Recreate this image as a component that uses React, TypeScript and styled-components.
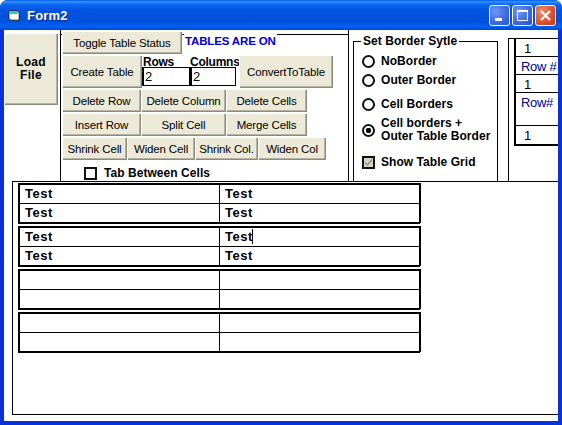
import React from "react";
import styled, { createGlobalStyle } from "styled-components";

const Global = createGlobalStyle`
  html, body { margin: 0; padding: 0; background: #fff; }
  * { box-sizing: border-box; }
  body { font-family: "Liberation Sans", Arial, sans-serif; color: #000; }
`;

const Win = styled.div`
  width: 562px; height: 425px; display: flex; flex-direction: column; overflow: hidden;
  background: #0831d9; border-radius: 8px 8px 0 0;
`;
const TitleBar = styled.div`
  height: 30px; flex: none; display: flex; align-items: center; padding: 0 6px 0 7px;
  background: linear-gradient(180deg, #0058ee 0%, #3593ff 6%, #0a6af0 14%, #0053e1 35%, #0050dc 70%, #0161f2 88%, #0048d0 100%);
`;
const TitleIcon = styled.svg`width: 15px; height: 15px; flex: none; margin-right: 5px;`;
const TitleText = styled.div`
  flex: 1; color: #fff; font-size: 13px; font-weight: 700; letter-spacing: .2px; text-shadow: 1px 1px 1px #0a2a90;
`;
const CapBtn = styled.div<{ $close?: boolean }>`
  width: 21px; height: 21px; margin-left: 2px; border: 1px solid #fff; border-radius: 3px; display: flex;
  align-items: center; justify-content: center;
  background: ${(p) => p.$close
    ? "radial-gradient(circle at 30% 30%, #e9906f, #d8502d 60%, #c23a1a)"
    : "radial-gradient(circle at 30% 30%, #6f97f2, #3a68e0 60%, #2a4fcf)"};
`;
const Client = styled.div`
  flex: 1; min-height: 0; margin: 0 4px 4px 4px; background: #fff; display: flex; flex-direction: column;
`;
const Top = styled.div`height: 151px; flex: none; display: flex; align-items: flex-start;`;

const Btn = styled.button<{ $w: number; $h?: number; $ml?: number }>`
  width: ${(p) => p.$w}px; height: ${(p) => p.$h ?? 23}px; flex: none; padding: 0; margin: 0 0 0 ${(p) => p.$ml ?? 0}px;
  font: 11.5px "Liberation Sans", Arial, sans-serif; letter-spacing: -.15px; color: #000; background: #ece9d8;
  border: 0; border-radius: 0;
  box-shadow: inset 1px 1px 0 #fff, inset -1px -1px 0 #8c8a7c, inset -2px -2px 0 #b5b2a4;
`;
const LoadCol = styled.div`width: 56px; flex: none; padding-top: 3px;`;
const LoadBtn = styled(Btn)`
  font-weight: 700; font-size: 12px; line-height: 13px; letter-spacing: .3px;
`;
const ControlsFrame = styled.div`
  width: 289px; height: 151px; flex: none; border-left: 1px solid #000; border-right: 1px solid #000;
  padding-left: 1px; display: flex; flex-direction: column; position: relative;
`;
const TopLine = styled.div`
  position: absolute; left: 0; right: 0; top: 4px; height: 1px; background: #000;
`;
const Row = styled.div<{ $mt?: number }>`
  display: flex; position: relative; margin-top: ${(p) => p.$mt ?? 0}px;
`;
const Status = styled.div`
  margin-left: 2px; padding: 0 1px; height: 20px; background: #fff; color: #0000d0;
  font-size: 11.5px; font-weight: 700; line-height: 21px; letter-spacing: -.15px; white-space: nowrap;
`;
const Field = styled.div<{ $w: number }>`
  width: ${(p) => p.$w}px; flex: none; display: flex; flex-direction: column;
`;
const FieldLabel = styled.div<{ $pl: number }>`
  height: 12px; font-size: 12px; font-weight: 700; line-height: 14px; padding-left: ${(p) => p.$pl}px; white-space: nowrap;
  letter-spacing: -.25px;
`;
const Input = styled.div<{ $w: number }>`
  width: ${(p) => p.$w}px; height: 19px; border: 1px solid #000; border-left-width: 2px;
  font-size: 13px; line-height: 17px; padding-left: 1px; background: #fff;
`;
const TabRow = styled.div`
  display: flex; align-items: center; margin: 6px 0 0 22px; font-size: 12px; font-weight: 700; letter-spacing: .05px;
`;
const CheckBox = styled.span<{ $disabled?: boolean }>`
  width: 13px; height: 13px; flex: none; border: 2px solid #111; background: ${(p) => (p.$disabled ? "#d8d5c8" : "#fff")};
  margin: 0 ${(p) => (p.$disabled ? 6 : 7)}px 0 0; display: flex; align-items: center; justify-content: center;
`;

const BorderFrame = styled.div`
  width: 145px; height: 140px; flex: none; margin: 11px 0 0 4px; border: 1px solid #000; border-bottom: 0;
  position: relative; padding: 12px 0 0 8px; display: flex; flex-direction: column;
`;
const Legend = styled.div`
  position: absolute; top: -7px; left: 7px; background: #fff; padding: 0 2px; font-size: 12px; font-weight: 700;
  line-height: 13px; letter-spacing: .05px; white-space: nowrap;
`;
const Radio = styled.div<{ $h: number; $mt?: number }>`
  display: flex; align-items: center; height: ${(p) => p.$h}px; margin-top: ${(p) => p.$mt ?? 0}px;
  font-size: 12px; font-weight: 700; line-height: 13px; letter-spacing: .05px; white-space: nowrap;
`;
const Dot = styled.span<{ $on?: boolean }>`
  width: 13px; height: 13px; flex: none; border: 2px solid #111; border-radius: 50%; margin-right: 6px;
  background: ${(p) => (p.$on ? "radial-gradient(circle, #000 0 2.5px, #fff 3px)" : "#fff")};
`;
const RowsFrame = styled.div`
  width: 50px; height: 143px; flex: none; margin: 8px 0 0 10px; border-left: 1px solid #000; border-top: 1px solid #000;
  padding-left: 5px; overflow: hidden;
`;
const MiniTable = styled.div`
  width: 60px; border: 2px solid #000; border-top: 0; border-right: 0; display: flex; flex-direction: column;
`;
const MiniRow = styled.div<{ $h: number; $blue?: boolean; $last?: boolean }>`
  height: ${(p) => p.$h}px; padding: 2px 0 0 ${(p) => (p.$blue ? 5 : 8)}px; font-size: 13px; line-height: 15px;
  letter-spacing: ${(p) => (p.$blue ? "-.3px" : 0)};
  color: ${(p) => (p.$blue ? "#000080" : "#000")};
  border-bottom: ${(p) => (p.$last ? 0 : "1px solid #000")}; white-space: nowrap;
`;

const Canvas = styled.div`
  height: 234px; flex: none; margin-left: 8px; border: 1px solid #000; border-right: 0;
  padding: 1px 0 0 5px; display: flex; flex-direction: column; gap: 2px;
`;
const DocTable = styled.div`
  width: 403px; height: 41px; flex: none; border: 2px solid #000; display: grid;
  grid-template-columns: 200px 1fr; grid-template-rows: 19px 1fr; position: relative;
  &::after { content: ""; position: absolute; right: -2px; bottom: -2px; width: 1px; height: 1px; background: #fff; }
`;
const Cell = styled.div<{ $right?: boolean; $bottom?: boolean }>`
  padding-left: 5px; font-size: 13px; font-weight: 700; letter-spacing: .55px; line-height: 18px;
  border-right: ${(p) => (p.$right ? 0 : "1px solid #000")};
  border-bottom: ${(p) => (p.$bottom ? 0 : "1px solid #000")};
`;
const Caret = styled.span`
  display: inline-block; width: 1px; height: 15px; background: #000; vertical-align: -3px; margin-left: -1px;
`;

const tables = [
  [["Test", "Test"], ["Test", "Test"]],
  [["Test", "Test|"], ["Test", "Test"]],
  [["", ""], ["", ""]],
  [["", ""], ["", ""]],
];

export default function App() {
  return (
    <Win>
      <Global />
      <TitleBar>
        <TitleIcon viewBox="0 0 16 16">
          <path d="M2 3h9l2 2v8H4L2 11z" fill="#fff" stroke="#111" strokeWidth="1" />
          <rect x="2.5" y="3.5" width="9" height="3" fill="#2fc4c4" />
        </TitleIcon>
        <TitleText>Form2</TitleText>
        <CapBtn>
          <svg width="13" height="13" viewBox="0 0 13 13"><rect x="2" y="9" width="7" height="3" fill="#fff" /></svg>
        </CapBtn>
        <CapBtn>
          <svg width="13" height="13" viewBox="0 0 13 13"><path d="M1.5 1.5h10v10h-10z" fill="none" stroke="#fff" /><rect x="1" y="1" width="11" height="2" fill="#fff" /></svg>
        </CapBtn>
        <CapBtn $close>
          <svg width="13" height="13" viewBox="0 0 13 13"><path d="M2 2l9 9M11 2l-9 9" stroke="#fff" strokeWidth="2.2" /></svg>
        </CapBtn>
      </TitleBar>
      <Client>
        <Top>
          <LoadCol>
            <LoadBtn $w={54} $h={72}>Load<br />File</LoadBtn>
          </LoadCol>
          <ControlsFrame>
            <TopLine />
            <Row $mt={1}>
              <Btn $w={120}>Toggle Table Status</Btn>
              <Status>TABLES ARE ON</Status>
            </Row>
            <Row $mt={1}>
              <Btn $w={80} $h={33}>Create Table</Btn>
              <Field $w={48}>
                <FieldLabel $pl={1}>Rows</FieldLabel>
                <Input $w={48}>2</Input>
              </Field>
              <Field $w={46}>
                <FieldLabel $pl={0}>Columns</FieldLabel>
                <Input $w={46}>2</Input>
              </Field>
              <Btn $w={94} $h={33} $ml={3}>ConvertToTable</Btn>
            </Row>
            <Row $mt={1}>
              <Btn $w={79}>Delete Row</Btn>
              <Btn $w={85}>Delete Column</Btn>
              <Btn $w={81}>Delete Cells</Btn>
            </Row>
            <Row $mt={1}>
              <Btn $w={79}>Insert Row</Btn>
              <Btn $w={85}>Split Cell</Btn>
              <Btn $w={81}>Merge Cells</Btn>
            </Row>
            <Row $mt={1}>
              <Btn $w={65}>Shrink Cell</Btn>
              <Btn $w={68}>Widen Cell</Btn>
              <Btn $w={63}>Shrink Col.</Btn>
              <Btn $w={68}>Widen Col</Btn>
            </Row>
            <TabRow><CheckBox />Tab Between Cells</TabRow>
          </ControlsFrame>
          <BorderFrame>
            <Legend>Set Border Sytle</Legend>
            <Radio $h={14}><Dot />NoBorder</Radio>
            <Radio $h={14} $mt={5}><Dot />Outer Border</Radio>
            <Radio $h={14} $mt={10}><Dot />Cell Borders</Radio>
            <Radio $h={26} $mt={6}><Dot $on /><span>Cell borders +<br />Outer Table Border</span></Radio>
            <Radio $h={14} $mt={12}>
              <CheckBox $disabled>
                <svg width="9" height="9" viewBox="0 0 9 9"><path d="M1 4.5l2.5 2.5L8 1.5" fill="none" stroke="#9a978a" strokeWidth="1.6" /></svg>
              </CheckBox>Show Table Grid
            </Radio>
          </BorderFrame>
          <RowsFrame>
            <MiniTable>
              <MiniRow $h={18}>1</MiniRow>
              <MiniRow $h={18} $blue>Row #</MiniRow>
              <MiniRow $h={18}>1</MiniRow>
              <MiniRow $h={33} $blue>Row#</MiniRow>
              <MiniRow $h={18} $last>1</MiniRow>
            </MiniTable>
          </RowsFrame>
        </Top>
        <Canvas>
          {tables.map((t, i) => (
            <DocTable key={i}>
              {t.flatMap((r, ri) => r.map((c, ci) => (
                <Cell key={`${ri}${ci}`} $right={ci === 1} $bottom={ri === 1}>
                  {c.endsWith("|") ? <>{c.slice(0, -1)}<Caret /></> : c}
                </Cell>
              )))}
            </DocTable>
          ))}
        </Canvas>
      </Client>
    </Win>
  );
}
